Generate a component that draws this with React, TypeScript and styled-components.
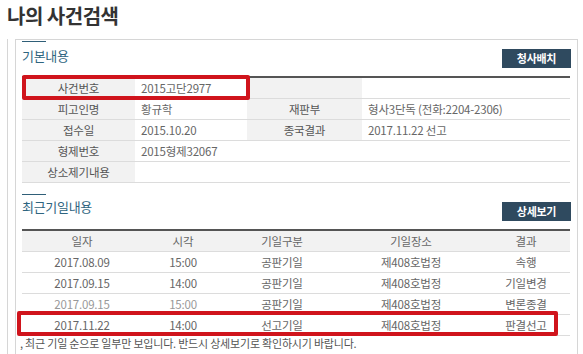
import React from 'react';
import styled, { createGlobalStyle } from 'styled-components';

const GlobalStyle = createGlobalStyle`
  html, body {
    margin: 0;
    padding: 0;
    background: #fff;
  }
  body {
    font-family: "Noto Sans CJK KR", "Noto Sans", sans-serif;
    color: #555;
    width: 583px;
    height: 354px;
    overflow: hidden;
  }
`;

const PageTitle = styled.h1`
  margin: 0;
  height: 39px;
  padding: 3px 0 0 7px;
  box-sizing: border-box;
  font-size: 20px;
  line-height: 26px;
  font-weight: 700;
  color: #333;
  letter-spacing: -0.5px;
`;

const Frame = styled.div`
  margin-left: 7px;
  border-left: 1px solid #d6d6d6;
  height: 315px;
`;

const Box = styled.div`
  margin-left: 7px;
  width: 563px;
  box-sizing: border-box;
  height: 315px;
  border: 1px solid #d6d6d6;
  border-bottom: none;
  padding: 1px 6px 0;
`;

const Accent = styled.div<{ $gap?: number }>`
  width: 24px;
  height: 1px;
  background: #2f5f78;
  margin-top: ${p => p.$gap ?? 0}px;
`;

const SectionHead = styled.div`
  display: flex;
  justify-content: space-between;
  align-items: flex-start;
  padding-top: 7px;
  margin-bottom: 8px;
`;

const SectionTitle = styled.h2<{ $shift?: number }>`
  margin: ${p => p.$shift ?? 0}px 0 0;
  font-size: 13px;
  line-height: 14px;
  font-weight: 400;
  color: #2f6580;
  letter-spacing: -0.3px;
`;

const DarkButton = styled.button`
  width: 69px;
  height: 19px;
  border: none;
  padding: 0;
  background: #2f4a5f;
  color: #fff;
  font-family: inherit;
  font-size: 11px;
  font-weight: 700;
  line-height: 19px;
  letter-spacing: -0.3px;
`;

const TableWrap = styled.div`
  position: relative;
`;

const Table = styled.table`
  width: 548px;
  border-collapse: collapse;
  table-layout: fixed;
  border-top: 2px solid #555;
  font-size: 11.5px;
  letter-spacing: -0.2px;
`;

const LabelCell = styled.th`
  height: 20px;
  padding: 0;
  background: #f2f2f2;
  color: #555;
  font-weight: 400;
  text-align: center;
  border-bottom: 1px solid #dcdcdc;
`;

const ValueCell = styled.td`
  height: 20px;
  padding: 0 0 0 6px;
  color: #666;
  text-align: left;
  border-bottom: 1px solid #dcdcdc;
  white-space: nowrap;
`;

const HeadCell = styled.th`
  height: 20px;
  padding: 0;
  background: #f2f2f2;
  color: #666;
  font-weight: 400;
  text-align: center;
  border-bottom: 1px solid #dcdcdc;
`;

const DataCell = styled.td<{ $faint?: boolean }>`
  height: 20px;
  padding: 0;
  color: ${p => (p.$faint ? '#999' : '#666')};
  text-align: center;
  border-bottom: 1px solid #dcdcdc;
  white-space: nowrap;
`;

const Highlight = styled.div<{ $left: number; $top: number; $w: number; $h: number }>`
  position: absolute;
  left: ${p => p.$left}px;
  top: ${p => p.$top}px;
  width: ${p => p.$w}px;
  height: ${p => p.$h}px;
  box-sizing: border-box;
  border: 4px solid #d0141c;
  border-radius: 2px;
  pointer-events: none;
`;

const Note = styled.p`
  margin: 0 0 0 -2px;
  font-size: 11px;
  line-height: 14px;
  color: #555;
  letter-spacing: -0.2px;
  white-space: nowrap;
`;

const hearings = [
  { date: '2017.08.09', time: '15:00', kind: '공판기일', place: '제408호법정', result: '속행' },
  { date: '2017.09.15', time: '14:00', kind: '공판기일', place: '제408호법정', result: '기일변경' },
  { date: '2017.09.15', time: '15:00', kind: '공판기일', place: '제408호법정', result: '변론종결', faint: true },
  { date: '2017.11.22', time: '14:00', kind: '선고기일', place: '제408호법정', result: '판결선고' },
];

export default function App() {
  return (
    <>
      <GlobalStyle />
      <PageTitle>나의 사건검색</PageTitle>
      <Frame>
        <Box>
          <Accent />
          <SectionHead>
            <SectionTitle>기본내용</SectionTitle>
            <DarkButton>청사배치</DarkButton>
          </SectionHead>
          <TableWrap>
            <Table>
              <colgroup>
                <col style={{ width: 113 }} />
                <col style={{ width: 112 }} />
                <col style={{ width: 115 }} />
                <col />
              </colgroup>
              <tbody>
                <tr>
                  <LabelCell>사건번호</LabelCell>
                  <ValueCell>2015고단2977</ValueCell>
                  <LabelCell />
                  <ValueCell />
                </tr>
                <tr>
                  <LabelCell>피고인명</LabelCell>
                  <ValueCell>황규학</ValueCell>
                  <LabelCell>재판부</LabelCell>
                  <ValueCell>형사3단독 (전화:2204-2306)</ValueCell>
                </tr>
                <tr>
                  <LabelCell>접수일</LabelCell>
                  <ValueCell>2015.10.20</ValueCell>
                  <LabelCell>종국결과</LabelCell>
                  <ValueCell>2017.11.22 선고</ValueCell>
                </tr>
                <tr>
                  <LabelCell>형제번호</LabelCell>
                  <ValueCell colSpan={3}>2015형제32067</ValueCell>
                </tr>
                <tr>
                  <LabelCell>상소제기내용</LabelCell>
                  <ValueCell colSpan={3} />
                </tr>
              </tbody>
            </Table>
            <Highlight $left={0} $top={-1} $w={228} $h={25} />
          </TableWrap>

          <Accent $gap={11} />
          <SectionHead>
            <SectionTitle $shift={-2}>최근기일내용</SectionTitle>
            <DarkButton>상세보기</DarkButton>
          </SectionHead>
          <TableWrap>
            <Table>
              <colgroup>
                <col style={{ width: 120 }} />
                <col style={{ width: 82 }} />
                <col style={{ width: 116 }} />
                <col style={{ width: 142 }} />
                <col />
              </colgroup>
              <thead>
                <tr>
                  <HeadCell>일자</HeadCell>
                  <HeadCell>시각</HeadCell>
                  <HeadCell>기일구분</HeadCell>
                  <HeadCell>기일장소</HeadCell>
                  <HeadCell>결과</HeadCell>
                </tr>
              </thead>
              <tbody>
                {hearings.map((h, i) => (
                  <tr key={i}>
                    <DataCell $faint={h.faint}>{h.date}</DataCell>
                    <DataCell $faint={h.faint}>{h.time}</DataCell>
                    <DataCell>{h.kind}</DataCell>
                    <DataCell>{h.place}</DataCell>
                    <DataCell>{h.result}</DataCell>
                  </tr>
                ))}
              </tbody>
            </Table>
            <Highlight $left={-5} $top={82} $w={541} $h={25} />
          </TableWrap>
          <Note>, 최근 기일 순으로 일부만 보입니다. 반드시 상세보기로 확인하시기 바랍니다.</Note>
        </Box>
      </Frame>
    </>
  );
}
